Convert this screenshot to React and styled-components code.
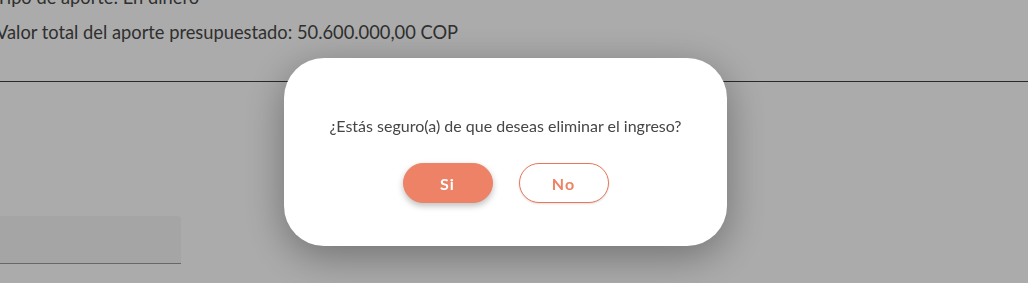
import React from 'react';
import styled, { createGlobalStyle } from 'styled-components';

const GlobalStyle = createGlobalStyle`
    html, body {
        margin: 0;
        padding: 0;
        overflow: hidden;
        background: #ffffff;
        font-family: Lato, "Open Sans", sans-serif;
    }
`;

const Page = styled.div`
    height: 283px;
    margin-top: -15px;
    margin-left: -4px;
`;

const Info = styled.p`
    margin: 0 0 11px 0;
    font-size: 18.3px;
    line-height: 24px;
    color: #474747;
    white-space: nowrap;
`;

const Divider = styled.hr`
    margin: 37px 0 0 0;
    width: 1040px;
    border: none;
    border-top: 1px solid #3e3e3e;
`;

const Field = styled.div`
    margin-top: 134px;
    width: 185px;
    height: 47px;
    background: #f7f7f7;
    border-top-right-radius: 4px;
    border-bottom: 1px solid #9a9a9a;
`;

const Overlay = styled.div`
    position: fixed;
    inset: 0;
    background: rgba(0, 0, 0, 0.33);
    display: flex;
    align-items: center;
    justify-content: center;
    padding: 21px 17px 0 0;
`;

const Modal = styled.div`
    width: 443px;
    height: 188px;
    box-sizing: border-box;
    background: #ffffff;
    border-radius: 40px;
    box-shadow: 0 10px 40px rgba(0, 0, 0, 0.35);
    display: flex;
    flex-direction: column;
    align-items: center;
    padding-top: 58px;
`;

const Question = styled.p`
    margin: 0;
    font-size: 16px;
    line-height: 20px;
    color: #464646;
`;

const Actions = styled.div`
    display: flex;
    gap: 26px;
    margin-top: 27px;
`;

const ActionButton = styled.button`
    width: 90px;
    height: 40px;
    border-radius: 20px;
    font-family: Lato, "Open Sans", sans-serif;
    font-size: 16px;
    font-weight: 700;
    letter-spacing: 1px;
    cursor: pointer;
    border: 1px solid ${({ $filled }) => ($filled ? '#ee8266' : '#ea7559')};
    background: ${({ $filled }) => ($filled ? '#ee8266' : '#ffffff')};
    color: ${({ $filled }) => ($filled ? '#ffffff' : '#ee8266')};
    box-shadow: ${({ $filled }) => ($filled ? '0 3px 6px rgba(0, 0, 0, 0.25)' : '0 1px 2px rgba(0, 0, 0, 0.12)')};
`;

const App = () => (
    <>
        <GlobalStyle />
        <Page>
            <Info>Tipo de aporte: En dinero</Info>
            <Info>Valor total del aporte presupuestado: 50.600.000,00 COP</Info>
            <Divider />
            <Field />
        </Page>
        <Overlay>
            <Modal>
                <Question>¿Estás seguro(a) de que deseas eliminar el ingreso?</Question>
                <Actions>
                    <ActionButton type="button" $filled>Si</ActionButton>
                    <ActionButton type="button">No</ActionButton>
                </Actions>
            </Modal>
        </Overlay>
    </>
);

export default App;
